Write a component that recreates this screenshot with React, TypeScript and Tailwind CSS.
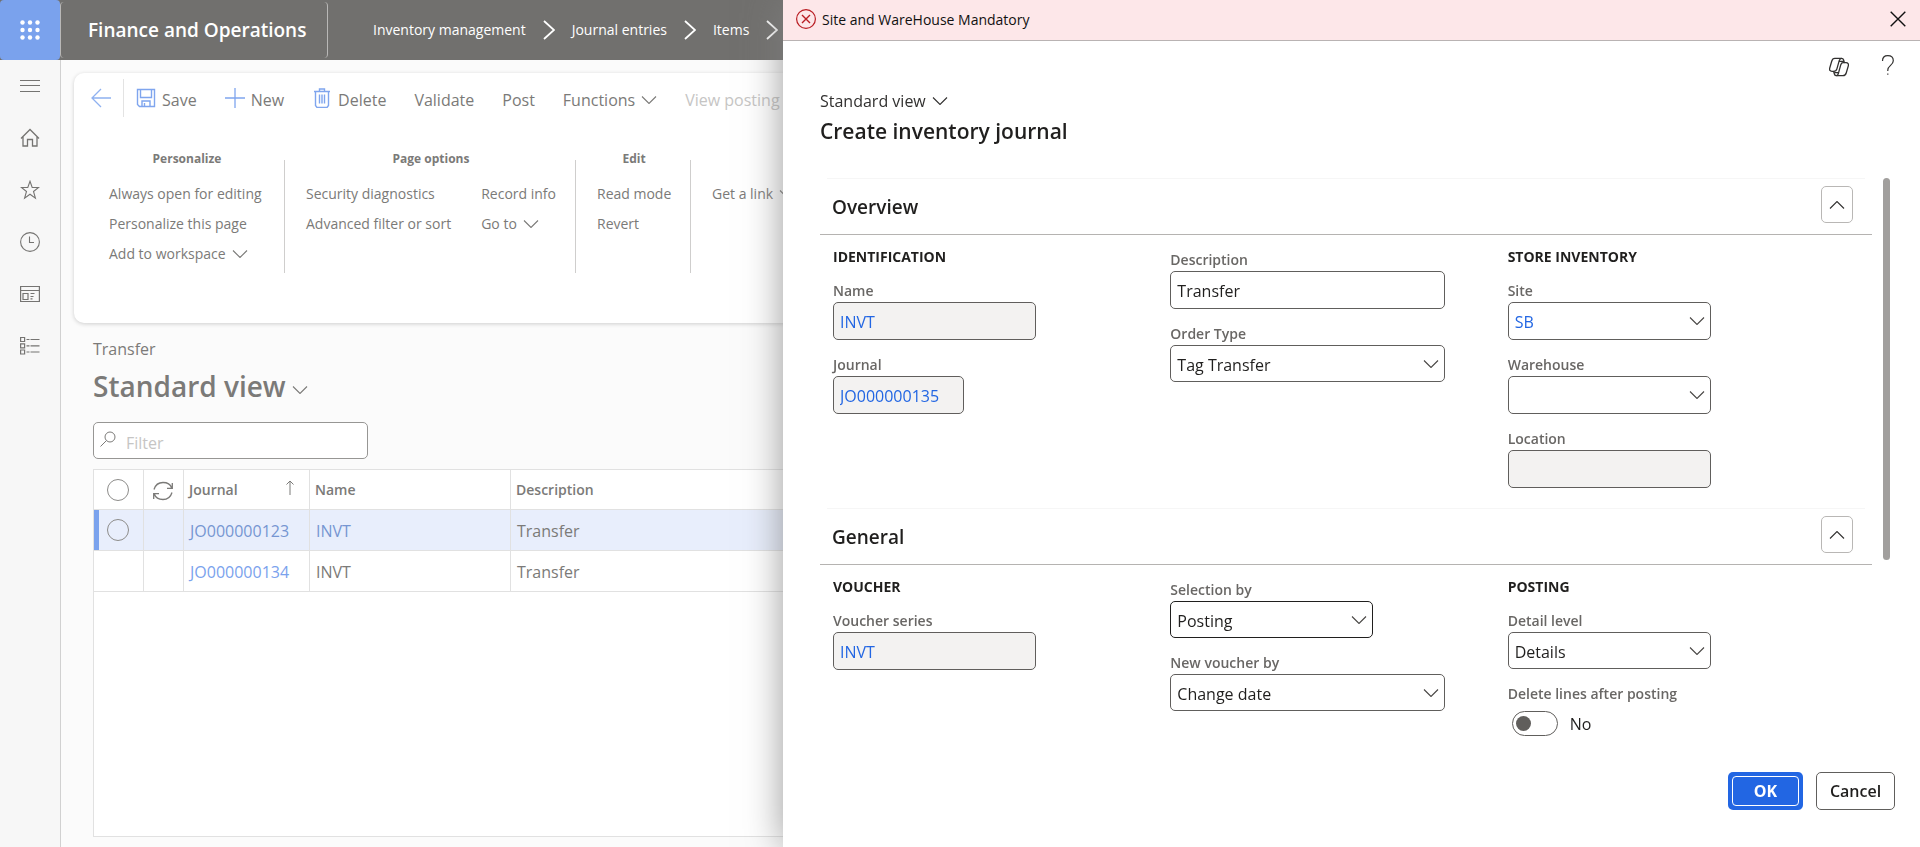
import { ReactNode, useId } from "react";

type IconProps = { className?: string };

function ChevronDown({ className = "" }: IconProps) {
  return (
    <svg className={`h-2 w-4 shrink-0 ${className}`} viewBox="0 0 16 8" fill="none" stroke="currentColor" strokeWidth="1.1" aria-hidden="true">
      <path d="M1 .5l7 7 7-7" />
    </svg>
  );
}

function ChevronRight() {
  return (
    <svg className="h-5 w-3 shrink-0" viewBox="0 0 12 20" fill="none" stroke="currentColor" strokeWidth="1.8" aria-hidden="true">
      <path d="M1 1l10 9-10 9" />
    </svg>
  );
}

function WaffleIcon() {
  return (
    <svg className="size-5" viewBox="0 0 20 20" fill="currentColor" aria-hidden="true">
      {[2.5, 10, 17.5].map((y) => [2.5, 10, 17.5].map((x) => <circle key={`${x}-${y}`} cx={x} cy={y} r="2.2" />))}
    </svg>
  );
}

const navIcons: { label: string; art: ReactNode }[] = [
  { label: "Expand navigation", art: <path d="M0 4.5h20M0 9.5h20M0 15.5h20" /> },
  {
    label: "Home",
    art: <path d="M1 10.500L10 1.500l9 9M3 9v9h4.500v-6.500h5V18H17V9" strokeWidth="1.3" />,
  },
  {
    label: "Favorites",
    art: <path d="M10 1.3l2.2 6.2h6.4l-5.1 4 1.9 6.6L10 14.200l-5.400 3.900 1.900-6.600-5.100-4h6.400z" />,
  },
  {
    label: "Recent",
    art: (
      <>
        <circle cx="10" cy="10" r="9.4" />
        <path d="M9.500 4.500v6h4.500" />
      </>
    ),
  },
  {
    label: "Workspaces",
    art: (
      <path d="M.6 2.500h18.800v15H.6zM.6 6.500h18.800M3 9.500h5v6H3zM10.500 9.500h4M10.500 12.500h3M10.500 14.800h2" strokeWidth="1.2" />
    ),
  },
  {
    label: "Modules",
    art: (
      <path d="M.6 1.500h4v4h-4zM.6 7.800h4v4h-4zM.6 14h4v4h-4zM6.500 3.500h3M10.500 3.500h9M6.500 9.800h3M10.500 9.800h9M6.500 16h3M10.500 16h9" strokeWidth="1.2" />
    ),
  },
];

function LineIcon({ children, className = "" }: { children: ReactNode; className?: string }) {
  return (
    <svg className={`size-5 shrink-0 ${className}`} viewBox="0 0 20 20" fill="none" stroke="currentColor" strokeWidth="1.1" aria-hidden="true">
      {children}
    </svg>
  );
}

function Header() {
  return (
    <header className="flex h-15 shrink-0 items-stretch bg-[#71706e] text-white">
      <button aria-label="App launcher" className="flex w-15 shrink-0 items-center justify-center rounded bg-[#7aa2ed]">
        <WaffleIcon />
      </button>
      <div className="my-0.5 flex w-[268px] shrink-0 items-center rounded border-x border-[#b9b8b7] pl-[27px] text-[19px] font-semibold whitespace-nowrap">
        Finance and Operations
      </div>
      <nav className="ml-[45px] flex items-center gap-[17px] text-sm whitespace-nowrap">
        <a href="#inventory">Inventory management</a>
        <ChevronRight />
        <a href="#journals">Journal entries</a>
        <ChevronRight />
        <a href="#items">Items</a>
        <ChevronRight />
      </nav>
    </header>
  );
}

function Sidebar() {
  return (
    <nav className="flex w-[61px] shrink-0 flex-col items-center gap-8 border-r border-[#d1d1d1] bg-[#f7f7f7] pt-4 text-[#757472]">
      {navIcons.map((n) => (
        <button key={n.label} aria-label={n.label} className="block">
          <LineIcon>{n.art}</LineIcon>
        </button>
      ))}
    </nav>
  );
}

function RibbonGroup({ title, columns, className }: { title: string; columns: ReactNode[][]; className: string }) {
  return (
    <div className={`h-[113px] shrink-0 border-r border-[#cfcecd] ${className}`}>
      <h3 className="-mt-[9px] text-center text-xs leading-4 font-bold">{title}</h3>
      <div className="mt-3 flex justify-between">
        {columns.map((items, i) => (
          <div key={i} className="flex flex-col items-start">
            {items.map((item, j) => (
              <button key={j} className="flex h-[30px] items-center gap-1.5 text-sm whitespace-nowrap">
                {item}
              </button>
            ))}
          </div>
        ))}
      </div>
    </div>
  );
}

function ActionPane() {
  return (
    <section className="mt-[13px] ml-[13px] h-[250px] shrink-0 rounded-l-[10px] bg-white text-[#7b7a78] shadow-[0_1px_4px_rgba(0,0,0,0.18)]">
      <div className="flex h-[50px] items-center text-base whitespace-nowrap">
        <button aria-label="Back" className="ml-[17px] text-[#8fb1f0]">
          <LineIcon>
            <path d="M20 10H1M10 1L1 10l9 9" strokeWidth="1.3" />
          </LineIcon>
        </button>
        <div className="ml-3 h-[38px] border-l border-[#e3e3e3]" />
        <div className="ml-3 flex items-center gap-7 pt-1">
          <button className="flex items-center gap-1.5">
            <LineIcon className="-mt-1 text-[#7fa5ee]">
              <path d="M1.500 1.500h17v17H3.500l-2-2zM4.500 1.500v8h11v-8M6 18.500v-5.500h8v5.500M8.500 15v3.500" strokeWidth="1.4" />
            </LineIcon>
            Save
          </button>
          <button className="flex items-center gap-1.5">
            <LineIcon className="-mt-1 text-[#7fa5ee]">
              <path d="M10 0v20M0 10h20" strokeWidth="1.3" />
            </LineIcon>
            New
          </button>
          <button className="flex items-center gap-1.5">
            <LineIcon className="-mt-1 text-[#7fa5ee]">
              <path d="M2 3.500h16M7.500 3.500v-2.500h5v2.500M3.500 3.500v14l1.500 2h10l1.500-2v-14M7.500 6.500v9M10 6.500v9M12.500 6.500v9" strokeWidth="1.4" />
            </LineIcon>
            Delete
          </button>
          <button>Validate</button>
          <button>Post</button>
          <button className="flex items-center gap-1.5">
            Functions
            <ChevronDown />
          </button>
          <button className="text-[#c6c5c4]" disabled>
            View posting
          </button>
        </div>
      </div>
      <div className="mt-[37px] flex">
        <RibbonGroup
          title="Personalize"
          className="w-[211px] pr-[19px] pl-[35px]"
          columns={[["Always open for editing", "Personalize this page", <>Add to workspace <ChevronDown /></>]]}
        />
        <RibbonGroup
          title="Page options"
          className="w-[291px] pr-[19px] pl-[21px]"
          columns={[
            ["Security diagnostics", "Advanced filter or sort"],
            ["Record info", <>Go to <ChevronDown /></>],
          ]}
        />
        <RibbonGroup title="Edit" className="w-[115px] pr-[19px] pl-[21px]" columns={[["Read mode", "Revert"]]} />
        <div className="pt-[19px] pl-[21px]">
          <button className="flex h-[30px] items-center gap-1.5 text-sm whitespace-nowrap">
            Get a link
            <ChevronDown />
          </button>
        </div>
      </div>
    </section>
  );
}

const journals = [
  { id: "JO000000123", name: "INVT", description: "Transfer", selected: true },
  { id: "JO000000134", name: "INVT", description: "Transfer", selected: false },
];

function RoundCheck({ label }: { label: string }) {
  return (
    <input
      type="checkbox"
      aria-label={label}
      className="ml-[13px] block size-[22px] appearance-none rounded-full border border-[#8d8c8a]"
    />
  );
}

function JournalGrid() {
  const head = "h-10 border-r border-b border-[#e1e1e1]";
  const cell = "h-[41px] border-r border-b border-[#e1e1e1]";
  return (
    <div className="mt-2.5 mb-[10px] flex-1 border border-[#e1e1e1] bg-white">
      <table className="w-full table-fixed border-separate border-spacing-0 text-left text-base text-[#7b7a78]">
        <colgroup>
          <col className="w-[50px]" />
          <col className="w-10" />
          <col className="w-[126px]" />
          <col className="w-[201px]" />
          <col />
        </colgroup>
        <thead>
          <tr className="text-sm">
            <th className={head}>
              <RoundCheck label="Select all rows" />
            </th>
            <th className={`${head} pt-0.5 pl-[9px]`}>
              <LineIcon>
                <path d="M1 8.500C2.500 3.500 6 1.500 10 1.500s7.500 2 8.700 5.500M19.300 2v5.300h-5.300M19 11.500c-1.500 5-5 7-9 7s-7.500-2-8.700-5.500M.7 18v-5.300H6" strokeWidth="1.3" />
              </LineIcon>
            </th>
            <th className={`${head} px-[5px] font-semibold`}>
              <span className="flex items-center justify-between pr-2.5">
                Journal
                <svg className="-mt-1 h-4 w-2" viewBox="0 0 8 16" fill="none" stroke="currentColor" aria-hidden="true">
                  <path d="M4 1v14M.5 4.500L4 1l3.500 3.500" />
                </svg>
              </span>
            </th>
            <th className={`${head} px-[5px] font-semibold`}>Name</th>
            <th className={`${head} px-[5px] font-semibold`}>Description</th>
          </tr>
        </thead>
        <tbody>
          {journals.map((j) => (
            <tr key={j.id} className={j.selected ? "bg-[#e8eefc]" : "bg-white"}>
              <td className={`${cell} ${j.selected ? "shadow-[inset_5px_0_0_#7aa2ed]" : ""}`}>
                {j.selected && <RoundCheck label={`Select ${j.id}`} />}
              </td>
              <td className={cell} />
              <td className={`${cell} px-1.5 pt-0.5`}>
                <a href="#journal" className={j.selected ? "text-[#7696d2]" : "text-[#7aa2ed]"}>{j.id}</a>
              </td>
              <td className={`${cell} px-1.5 pt-0.5 ${j.selected ? "text-[#7696d2]" : ""}`}>{j.name}</td>
              <td className={`${cell} px-1.5 pt-0.5`}>{j.description}</td>
            </tr>
          ))}
        </tbody>
      </table>
    </div>
  );
}

function JournalPage() {
  return (
    <main className="flex min-w-0 flex-1 flex-col bg-[#fbfbfb]">
      <ActionPane />
      <div className="flex flex-1 flex-col pr-8 pl-8 pt-3.5 text-[#7b7a78]">
        <p className="text-base leading-6">Transfer</p>
        <button className="mt-[7px] flex items-center gap-1.5 self-start text-[28px] leading-9 font-semibold">
          Standard view
          <ChevronDown className="mt-2" />
        </button>
        <label className="mt-[18px] flex h-[37px] w-[275px] items-center gap-2.5 rounded-[5px] border border-[#979694] bg-white pl-1.5">
          <svg className="-mt-1 size-4" viewBox="0 0 16 16" fill="none" stroke="currentColor" aria-hidden="true">
            <circle cx="10" cy="6" r="5" />
            <path d="M6.500 9.500L.5 15.500" />
          </svg>
          <input
            aria-label="Filter"
            placeholder="Filter"
            className="min-w-0 flex-1 bg-transparent pt-1 text-base outline-none placeholder:text-[#c6c5c4]"
          />
        </label>
        <JournalGrid />
      </div>
    </main>
  );
}

type FieldProps = {
  label: string;
  value?: string;
  width: string;
  kind?: "text" | "readonly" | "lookup" | "select";
  link?: boolean;
  focused?: boolean;
};

function Field({ label, value = "", width, kind = "text", link, focused }: FieldProps) {
  const id = useId();
  const box = `w-full appearance-none rounded-[5px] border px-1.5 pt-0.5 text-base outline-none ${
    kind === "select" ? "h-[37px]" : "h-[38px]"
  } ${focused ? "border-[#201f1e]" : "border-[#605e5c]"} ${kind === "readonly" ? "bg-[#f3f2f1]" : "bg-white"} ${
    link ? "text-[#2266e3]" : "text-[#201f1e]"
  }`;
  return (
    <div className={width}>
      <label htmlFor={id} className="mb-px block text-sm font-semibold text-[#696765]">
        {label}
      </label>
      <div className="relative">
        {kind === "select" ? (
          <select id={id} defaultValue={value} className={box}>
            <option>{value}</option>
          </select>
        ) : (
          <input id={id} defaultValue={value} readOnly={kind === "readonly"} className={box} />
        )}
        {(kind === "select" || kind === "lookup") && (
          <span className="pointer-events-none absolute inset-y-0 right-1.5 flex items-center text-[#484644]">
            <ChevronDown />
          </span>
        )}
      </div>
    </div>
  );
}

function Section({ title, children }: { title: string; children: ReactNode }) {
  return (
    <section>
      <div className="mx-[7px] h-px bg-[#f6f6f6]" />
      <div className="flex h-14 items-start justify-between border-b border-[#b5b3b1] pr-[19px] pl-3">
        <h2 className="pt-3.5 text-[19px] leading-7 font-semibold text-[#201f1e]">{title}</h2>
        <button aria-label={`Collapse ${title}`} className="mt-[7px] flex h-[37px] w-8 items-center justify-center rounded-[5px] border border-[#b9b7b5] text-[#323130]">
          <ChevronDown className="rotate-180" />
        </button>
      </div>
      <div className="grid grid-cols-3 pr-[27px] pb-5 pl-[13px]">{children}</div>
    </section>
  );
}

function FieldColumn({ title, children }: { title?: string; children: ReactNode }) {
  return (
    <div className={title ? "pt-3" : "pt-[15px]"}>
      {title && <h3 className="mb-3.5 text-sm font-bold text-[#201f1e]">{title}</h3>}
      <div className="flex flex-col gap-[15px]">{children}</div>
    </div>
  );
}

function Drawer() {
  return (
    <aside className="fixed inset-y-0 right-0 flex w-[1137px] max-w-full flex-col bg-white text-[#323130] shadow-[0_0_36px_rgba(128,128,128,0.8)]">
      <div role="alert" className="flex h-[41px] shrink-0 items-center border-b border-[#b9b3b3] bg-[#fde7e9] pr-3.5 pl-[13px] text-sm text-[#111111]">
        <svg className="-mt-0.5 size-5" viewBox="0 0 20 20" fill="none" stroke="#b91c22" strokeWidth="1.2" aria-hidden="true">
          <circle cx="10" cy="10" r="9.4" />
          <path d="M6 6l8 8M14 6l-8 8" strokeWidth="1.4" />
        </svg>
        <span className="ml-1.5 flex-1">Site and WareHouse Mandatory</span>
        <button aria-label="Close message">
          <svg className="-mt-0.5 size-4" viewBox="0 0 16 16" fill="none" stroke="currentColor" strokeWidth="1.4" aria-hidden="true">
            <path d="M.7.7l14.600 14.600M15.300.7L.7 15.300" />
          </svg>
        </button>
      </div>
      <div className="flex shrink-0 justify-between pr-[25px] pb-[33px] pl-[37px]">
        <div className="pt-12">
          <button className="flex items-center gap-1.5 text-base leading-6">
            Standard view
            <ChevronDown />
          </button>
          <h1 className="mt-1 text-[21px] leading-7 font-semibold text-[#201f1e]">Create inventory journal</h1>
        </div>
        <div className="flex items-start gap-8 pt-3.5">
          <button aria-label="Copilot" className="mt-0.5">
            <svg className="size-5" viewBox="0 0 20 20" fill="none" stroke="currentColor" strokeWidth="1.3" strokeLinejoin="round" aria-hidden="true">
              <path d="M5.800 1.300H12.600C13.800 1.300 14.300 1.900 14.600 3L15.400 5.700H17C19 5.700 19.800 7 19.300 8.800L17.300 15.800C16.800 17.700 15.800 18.700 14 18.700H7.400C6.200 18.700 5.700 18.100 5.400 17L4.600 14.300H3C1 14.300.2 13 .7 11.200L2.700 4.200C3.200 2.300 4.100 1.300 5.800 1.300z" />
              <path d="M12.600 1.300C11.300 1.300 10.700 2.100 10.300 3.400L7.900 11.900C7.400 13.600 6.600 14.300 4.600 14.300M15.400 5.700H14C12.700 5.700 12.200 6.500 11.800 7.700L9.600 15.700C9 17.700 8.600 18.700 7.400 18.700M10.100 4.300h4.800M5.200 15.700h4.400" />
            </svg>
          </button>
          <button aria-label="Help">
            <svg className="h-5 w-3.5" viewBox="0 0 14 20" fill="none" stroke="currentColor" strokeWidth="1.2" aria-hidden="true">
              <path d="M1.500 6C1.500 2.500 3.800.7 6.800.7s5.500 1.800 5.500 5c0 4.500-5.500 4.800-5.500 9.300v1M6.800 18.500v1.200" />
            </svg>
          </button>
        </div>
      </div>
      <div className="flex min-h-0 flex-1 pr-[30px] pl-[37px]">
        <div className="min-w-0 flex-1 overflow-hidden">
          <Section title="Overview">
            <FieldColumn title="IDENTIFICATION">
              <Field label="Name" value="INVT" kind="readonly" link width="w-[203px]" />
              <Field label="Journal" value="JO000000135" kind="readonly" link width="w-[131px]" />
            </FieldColumn>
            <FieldColumn>
              <Field label="Description" value="Transfer" width="w-[275px]" />
              <Field label="Order Type" value="Tag Transfer" kind="select" width="w-[275px]" />
            </FieldColumn>
            <FieldColumn title="STORE INVENTORY">
              <Field label="Site" value="SB" kind="lookup" link width="w-[203px]" />
              <Field label="Warehouse" kind="lookup" width="w-[203px]" />
              <Field label="Location" kind="readonly" width="w-[203px]" />
            </FieldColumn>
          </Section>
          <Section title="General">
            <FieldColumn title="VOUCHER">
              <Field label="Voucher series" value="INVT" kind="readonly" link width="w-[203px]" />
            </FieldColumn>
            <FieldColumn>
              <Field label="Selection by" value="Posting" kind="select" focused width="w-[203px]" />
              <Field label="New voucher by" value="Change date" kind="select" width="w-[275px]" />
            </FieldColumn>
            <FieldColumn title="POSTING">
              <Field label="Detail level" value="Details" kind="select" width="w-[203px]" />
              <div>
                <label htmlFor="delete-lines" className="block text-sm font-semibold text-[#696765]">
                  Delete lines after posting
                </label>
                <div className="mt-1.5 flex items-center gap-3 pl-1">
                  <input
                    id="delete-lines"
                    type="checkbox"
                    role="switch"
                    className="flex h-[25px] w-[46px] appearance-none items-center rounded-full border border-[#605e5c] pl-[3px] before:size-[15px] before:rounded-full before:bg-[#605e5c] before:content-['']"
                  />
                  <span className="pt-0.5 text-base leading-6 text-[#201f1e]">No</span>
                </div>
              </div>
            </FieldColumn>
          </Section>
        </div>
        <div className="ml-[11px] h-[382px] w-[7px] rounded-full bg-[#a19f9d]" />
      </div>
      <div className="flex shrink-0 justify-end gap-[13px] pt-2.5 pr-[25px] pb-[37px] text-base">
        <button className="h-[38px] w-[75px] rounded-[5px] bg-[#2266e3] p-1 font-bold text-white">
          <span className="flex h-full items-center justify-center rounded border border-white">OK</span>
        </button>
        <button className="h-[38px] w-[79px] rounded-[5px] border border-[#605e5c] text-base font-semibold text-[#201f1e]">Cancel</button>
      </div>
    </aside>
  );
}

export default function App() {
  return (
    <div className="flex h-screen flex-col overflow-hidden bg-[#fbfbfb] font-['Open_Sans','Noto_Sans',sans-serif]">
      <Header />
      <div className="flex min-h-0 flex-1">
        <Sidebar />
        <JournalPage />
      </div>
      <Drawer />
    </div>
  );
}
